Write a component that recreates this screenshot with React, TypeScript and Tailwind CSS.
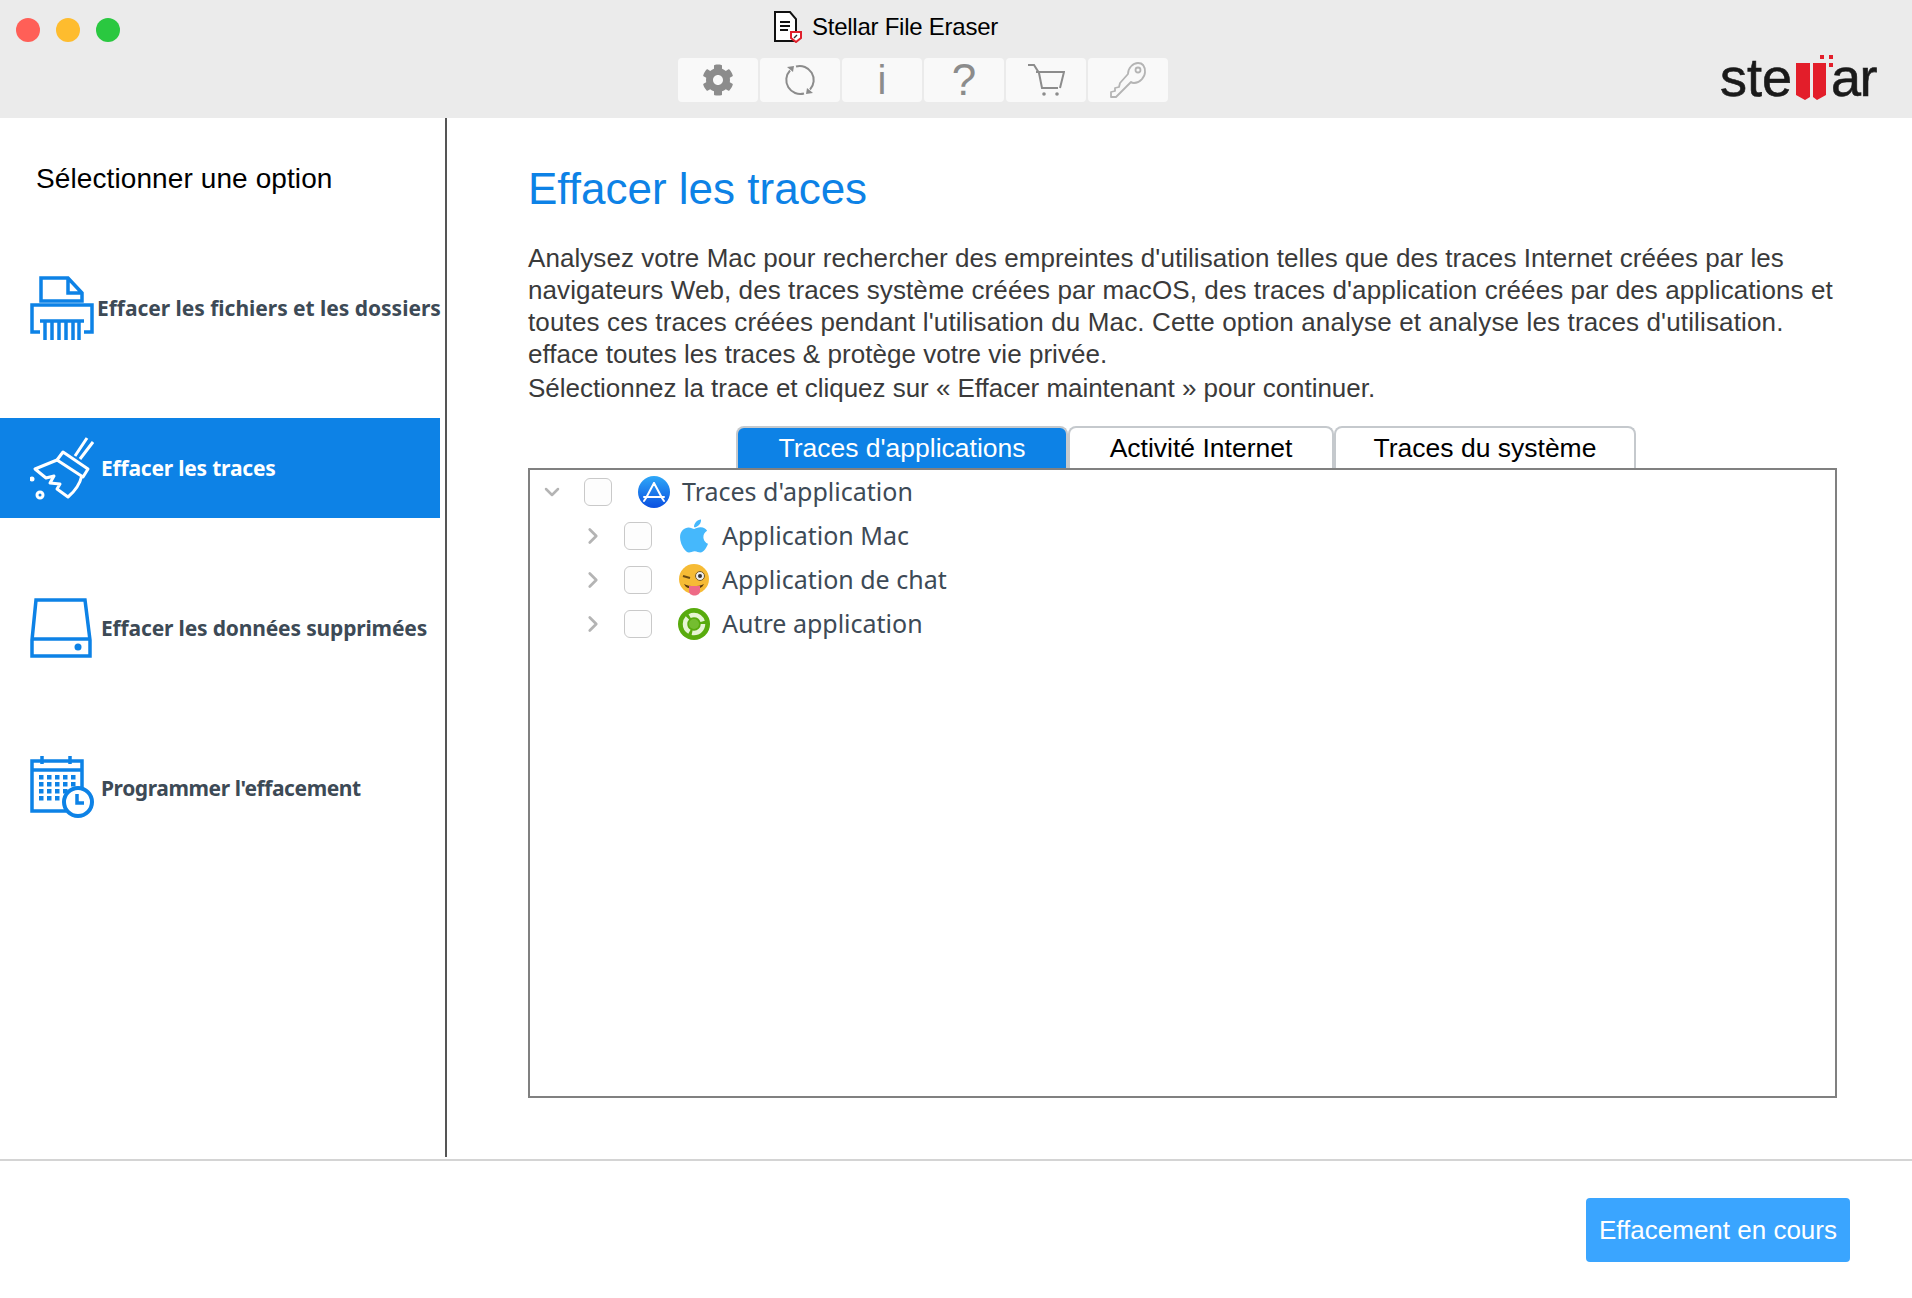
import { FaCog, FaApple } from "react-icons/fa";
import { ChevronDown, ChevronRight } from "lucide-react";

const sans = "font-['Liberation_Sans',Arial,sans-serif]";
const lucida = "font-['Noto_Sans',sans-serif]";

const ShredderIcon = () => (
  <svg width="64" height="64" viewBox="0 0 64 64" fill="none" stroke="#0d82e6" strokeWidth="3.5" className="shrink-0">
    <path d="M11 25V2h27l14 15v8zM38 2v15h14" />
    <path d="M10 56H2V29h60v27h-8" />
    <path d="M10 45h44M15 45v19M22 45v19M29 45v19M36 45v19M43 45v19M49 45v19" />
  </svg>
);

const BroomIcon = () => (
  <svg width="64" height="64" viewBox="0 0 64 64" fill="none" stroke="#fff" strokeWidth="3" strokeLinejoin="round" className="shrink-0">
    <path d="M45 20L57 2M50 23L63 6" />
    <path d="M33 16l25 17-5 8-26-17z" />
    <path d="M27 24L5 33l11 9 8-2-4 7 10 1-3 5 11 8c6-5 12-13 14-22" />
    <circle cx="2" cy="43" r="2.5" fill="#fff" stroke="none" />
    <circle cx="10" cy="59" r="3" />
  </svg>
);

const DiskIcon = () => (
  <svg width="64" height="64" viewBox="0 0 64 64" fill="none" stroke="#0d82e6" strokeWidth="3.5" className="shrink-0">
    <path d="M6 4h49l5 40v16H2V44z" />
    <path d="M2 43h58" />
    <circle cx="48" cy="51" r="3.5" fill="#0d82e6" stroke="none" />
  </svg>
);

const CalendarIcon = () => (
  <svg width="64" height="64" viewBox="0 0 64 64" fill="none" stroke="#0d82e6" strokeWidth="3.5" className="shrink-0">
    <path d="M36 55H2V5h50v27" />
    <path d="M2 14h50" />
    <path d="M12 0v8M40 0v8" />
    <g fill="#0d82e6" stroke="none">
      {[19, 26, 33, 40].map((y) =>
        [9, 17, 25, 33, 41].map((x) => (x > 25 && y > 33 ? null : <rect key={`${x}-${y}`} x={x} y={y} width="4.5" height="4.5" />))
      )}
    </g>
    <circle cx="48" cy="46" r="14" fill="#fff" strokeWidth="4" />
    <path d="M47 38v9h7" />
  </svg>
);

const RefreshIcon = () => (
  <svg width="34" height="34" viewBox="0 0 34 34" fill="none" stroke="#8c8c8c" strokeWidth="2">
    <path d="M13 3.5A14 14 0 0 1 27 26.5" />
    <path d="M21 30.5A14 14 0 0 1 7 7.5" />
    <path d="M24 25l6 5-7 1z" fill="#8c8c8c" stroke="none" />
    <path d="M10 9L4 4l7-1z" fill="#8c8c8c" stroke="none" />
  </svg>
);

const CartIcon = () => (
  <svg width="38" height="36" viewBox="0 0 38 36" fill="none" stroke="#8c8c8c" strokeWidth="2">
    <path d="M1 3h6l5 8 3 15h16" />
    <path d="M9 10h28l-4 16" />
    <circle cx="17" cy="32" r="1.8" fill="#8c8c8c" stroke="none" />
    <circle cx="30" cy="32" r="1.8" fill="#8c8c8c" stroke="none" />
  </svg>
);

const KeyIcon = () => (
  <svg width="38" height="38" viewBox="0 0 38 38" fill="none" stroke="#b4b4b4" strokeWidth="1.8" strokeLinejoin="round">
    <path d="M19 13c0-6 5-11 10-11s7 4 7 9-5 11-11 11c-1 0-2 0-3-1L7 36H2v-5l4-1v-3l4-1 1-4z" />
    <circle cx="29" cy="9" r="2.5" />
  </svg>
);

const DocIcon = () => (
  <svg width="28" height="32" viewBox="0 0 28 32" fill="none" className="shrink-0">
    <path d="M1 1h15l6 7v22H1z" fill="#fff" stroke="#111" strokeWidth="2" />
    <path d="M6 11h10M6 15h10M6 19h8" stroke="#111" strokeWidth="2" />
    <path d="M17 21h10v6l-5 4-5-4z" fill="#fff" stroke="#e0202c" strokeWidth="2" />
    <path d="M20 27l3-3" stroke="#333" strokeWidth="1.5" />
  </svg>
);

const AppStoreIcon = () => (
  <svg width="32" height="32" viewBox="0 0 32 32" fill="none" className="shrink-0">
    <defs>
      <linearGradient id="store" x1="0" y1="0" x2="0" y2="1">
        <stop offset="0" stopColor="#2ea8f8" />
        <stop offset="1" stopColor="#0b4fe0" />
      </linearGradient>
    </defs>
    <circle cx="16" cy="16" r="16" fill="url(#store)" />
    <path d="M16 7L8 22M16 7l8 15M6 21h20M8 22l-2 3M24 22l2 3" stroke="#fff" strokeWidth="2" strokeLinecap="round" />
  </svg>
);

const WinkIcon = () => (
  <svg width="32" height="32" viewBox="0 0 32 32" fill="none" className="shrink-0">
    <circle cx="16" cy="15" r="15" fill="#f6bb35" />
    <path d="M5 12l7 2" stroke="#6b4a12" strokeWidth="2" />
    <circle cx="22" cy="12" r="4.5" fill="#eee" stroke="#7a5a1c" strokeWidth="1" />
    <circle cx="22" cy="12" r="2" fill="#333" />
    <path d="M6 20c6 3 14 3 20 0-1 2-2 3-4 4H10c-2-1-3-2-4-4z" fill="#5a3a10" />
    <path d="M11 22h11v5c0 6-11 6-11 0z" fill="#ee6a86" />
  </svg>
);

const RecycleIcon = () => (
  <svg width="32" height="32" viewBox="0 0 32 32" fill="none" className="shrink-0">
    <circle cx="16" cy="16" r="16" fill="#58ab0d" />
    <circle cx="16" cy="16" r="9" stroke="#e6f4d4" strokeWidth="4.5" strokeDasharray="16 2.8" />
    <circle cx="16" cy="16" r="5" fill="#74bd30" />
  </svg>
);

const navItems = [
  { label: "Effacer les fichiers et les dossiers", icon: <ShredderIcon />, cls: "gap-[3px] tracking-[-0.03px]" },
  { label: "Effacer les traces", icon: <BroomIcon />, active: true, cls: "gap-[7px] tracking-[-0.2px]" },
  { label: "Effacer les données supprimées", icon: <DiskIcon />, cls: "gap-[7px] tracking-[-0.16px]" },
  { label: "Programmer l'effacement", icon: <CalendarIcon />, cls: "gap-[7px] tracking-[-0.42px]" },
];

const toolButtons = [
  <FaCog size={32} className="text-[#8c8c8c]" />,
  <RefreshIcon />,
  <span className="text-[40px] leading-none text-[#8c8c8c]">i</span>,
  <span className="text-[44px] leading-none text-[#8c8c8c]">?</span>,
  <CartIcon />,
  <KeyIcon />,
];

const tabs = [
  { label: "Traces d'applications", width: "w-[332px]", active: true },
  { label: "Activité Internet", width: "w-[266px]" },
  { label: "Traces du système", width: "w-[302px]" },
];

const treeChildren = [
  {
    label: "Application Mac",
    icon: (
      <span className="w-[32px] h-[32px] flex items-center justify-center">
        <FaApple size={38} className="shrink-0 text-[#45b8fc]" />
      </span>
    ),
  },
  { label: "Application de chat", icon: <WinkIcon /> },
  { label: "Autre application", icon: <RecycleIcon /> },
];

const Checkbox = () => (
  <span className="block w-[28px] h-[28px] shrink-0 rounded-[6px] border border-[#c9c9c9] bg-[#fdfdfd]" />
);

export default function App() {
  return (
    <div className={`w-[1912px] h-[1298px] flex flex-col bg-white overflow-hidden ${sans}`}>
      <header className="h-[118px] shrink-0 bg-[#ebebeb] flex">
        <div className="w-[678px] shrink-0 pl-[16px] pt-[18px] flex gap-[16px]">
          <span className="w-[24px] h-[24px] rounded-full bg-[#ff5f57]" />
          <span className="w-[24px] h-[24px] rounded-full bg-[#febc2e]" />
          <span className="w-[24px] h-[24px] rounded-full bg-[#2ac840]" />
        </div>
        <div className="w-[490px] shrink-0 flex flex-col">
          <div className="mt-[10px] ml-[96px] h-[34px] flex items-center gap-[10px]">
            <DocIcon />
            <span className="text-[24px] text-black tracking-[-0.25px]">Stellar File Eraser</span>
          </div>
          <div className="mt-[14px] flex gap-[2px]">
            {toolButtons.map((icon, i) => (
              <div key={i} className="w-[80px] h-[44px] rounded-[4px] bg-[#f9f9f9] flex items-center justify-center">
                {icon}
              </div>
            ))}
          </div>
        </div>
        <div className="ml-[552px] mt-[53px] h-[48px] flex items-end text-[54px] leading-[56px] text-[#1a1a1a] [-webkit-text-stroke:0.6px_#1a1a1a]">
          <span className="-mb-[4px]">ste</span>
          <svg width="38" height="47" viewBox="0 0 38 47" className="shrink-0 ml-[4px] -mr-[3px]">
            <path d="M0 9h14v34l-5 3-9-5zM17 9h13v32l-9 5-4-3z" fill="#e31e2a" />
            <path d="M24 1h4v4h-4zM33 1h4v4h-4zM33 9h4v4h-4z" fill="#e31e2a" />
          </svg>
          <span className="-mb-[4px] tracking-[-1.5px]">ar</span>
        </div>
      </header>

      <div className="h-[1041px] shrink-0 flex">
        <aside className="w-[447px] h-[1039px] shrink-0 border-r-2 border-[#555] flex flex-col">
          <h2 className="mt-[42px] ml-[36px] h-[38px] leading-[38px] text-[28px] text-black tracking-[0.1px]">
            Sélectionner une option
          </h2>
          <nav className="mt-[60px] flex flex-col gap-[60px]">
            {navItems.map((item) => (
              <div
                key={item.label}
                className={`w-[440px] h-[100px] pl-[30px] flex items-center ${item.cls} ${
                  item.active ? "bg-[#0d82e6] text-white" : "text-[#3d4a56]"
                }`}
              >
                {item.icon}
                <span className={`${lucida} pt-[2px] text-[21px] font-bold whitespace-nowrap`}>{item.label}</span>
              </div>
            ))}
          </nav>
        </aside>

        <main className="flex-1 pl-[81px] pr-[73px]">
          <h1 className="mt-[45px] h-[52px] leading-[52px] text-[44px] text-[#0d82e6]">Effacer les traces</h1>
          <div className="mt-[27px] text-[26px] leading-[32px] text-[#3a3a3a] whitespace-nowrap">
            <p className="tracking-[0.06px]">
              Analysez votre Mac pour rechercher des empreintes d'utilisation telles que des traces Internet créées par les
            </p>
            <p className="tracking-[0.09px]">
              navigateurs Web, des traces système créées par macOS, des traces d'application créées par des applications et
            </p>
            <p className="tracking-[0.14px]">
              toutes ces traces créées pendant l'utilisation du Mac. Cette option analyse et analyse les traces d'utilisation.
            </p>
            <p className="tracking-[0.03px]">efface toutes les traces &amp; protège votre vie privée.</p>
            <p className="mt-[2px] tracking-[-0.03px]">
              Sélectionnez la trace et cliquez sur « Effacer maintenant » pour continuer.
            </p>
          </div>
          <div className="mt-[22px] ml-[208px] flex h-[42px]">
            {tabs.map((tab) => (
              <div
                key={tab.label}
                className={`${tab.width} pt-[1px] rounded-t-[8px] border-2 border-b-0 border-[#c5c9cd] flex items-center justify-center text-[26.5px] ${
                  tab.active ? "bg-[#0d82e6] text-white" : "bg-white text-black"
                }`}
              >
                {tab.label}
              </div>
            ))}
          </div>
          <div className={`w-[1309px] h-[630px] border-2 border-[#808080] ${lucida} text-[25px] text-[#3d4a56]`}>
            <div className="h-[44px] pl-[10px] flex items-center">
              <ChevronDown size={24} strokeWidth={2.5} className="shrink-0 text-[#b4b4b4]" />
              <span className="ml-[20px]"><Checkbox /></span>
              <span className="ml-[26px]"><AppStoreIcon /></span>
              <span className="ml-[12px]">Traces d'application</span>
            </div>
            {treeChildren.map((row) => (
              <div key={row.label} className="h-[44px] pl-[50px] flex items-center">
                <ChevronRight size={26} strokeWidth={2.5} className="shrink-0 text-[#b4b4b4]" />
                <span className="ml-[18px]"><Checkbox /></span>
                <span className="ml-[26px]">{row.icon}</span>
                <span className="ml-[12px]">{row.label}</span>
              </div>
            ))}
          </div>
        </main>
      </div>

      <footer className="flex-1 border-t-2 border-[#d4d4d4] flex justify-end items-start pt-[37px] pr-[62px]">
        <button className="w-[264px] h-[64px] rounded-[4px] bg-[#3aa5ff] text-white text-[26px]">
          Effacement en cours
        </button>
      </footer>
    </div>
  );
}
